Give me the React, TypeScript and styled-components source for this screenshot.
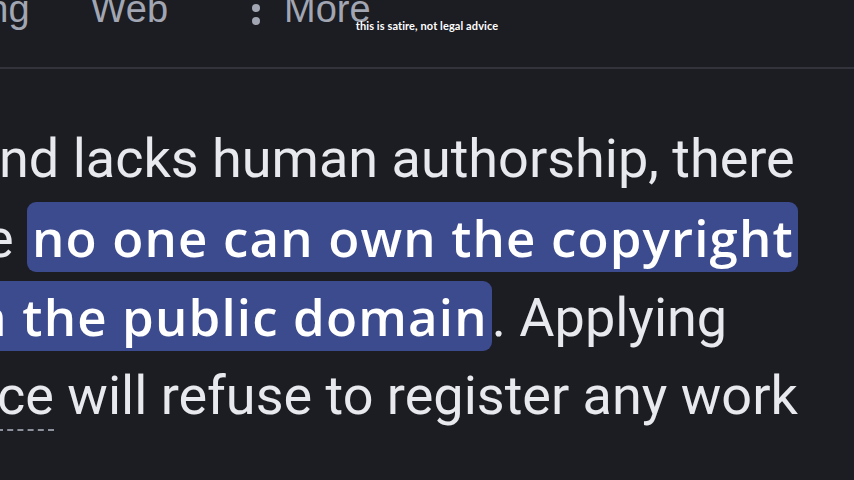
import React from 'react';
import styled, { createGlobalStyle } from 'styled-components';

const GlobalStyle = createGlobalStyle`
    html, body {
        margin: 0;
        padding: 0;
        background: #1c1c23;
    }
    #root {
        width: 854px;
        height: 480px;
    }
`

const Page = styled.div`
    position: relative;
    width: 854px;
    height: 480px;
    overflow: hidden;
    background: #1c1c23;
`

const NavBar = styled.div`
    height: 67px;
    border-bottom: 2px solid #33333b;
    overflow: hidden;
`

const NavRow = styled.div`
    display: flex;
    align-items: flex-start;
    gap: 61px;
    margin-top: -13px;
    font-family: "Liberation Sans", Arial, sans-serif;
    font-size: 38px;
    line-height: 44px;
    color: #a1a6b2;
`

const Tab = styled.div<{ $shift?: number }>`
    display: flex;
    align-items: flex-start;
    gap: 24px;
    margin-left: ${props => props.$shift || 0}px;
    white-space: nowrap;
`

const Kebab = styled.div`
    display: flex;
    flex-direction: column;
    gap: 5px;
    padding-top: 4px;
`

const Dot = styled.span`
    width: 8px;
    height: 8px;
    border-radius: 50%;
    background: #a1a6b2;
`

const Caption = styled.div`
    position: absolute;
    top: 19px;
    left: 0;
    right: 0;
    text-align: center;
    font-family: Lato, "Noto Sans", sans-serif;
    font-weight: bold;
    font-size: 11px;
    color: #ffffff;
    letter-spacing: 0.1px;
`

const Paragraph = styled.div`
    padding-top: 50px;
    font-family: Roboto, "Liberation Sans", sans-serif;
    font-size: 54px;
    color: #e8e9ee;
`

const Line = styled.div<{ $indent?: number }>`
    height: 79px;
    line-height: 79px;
    white-space: nowrap;
    text-indent: ${props => props.$indent || 0}px;
`

const Mark = styled.span<{ $roundLeft?: boolean }>`
    font-family: "Open Sans", "Noto Sans", sans-serif;
    font-weight: 600;
    font-size: 51px;
    letter-spacing: 1.15px;
    color: #ffffff;
    background: #3c4a8e;
    padding: 0 4px 0 5px;
    border-radius: ${props => props.$roundLeft ? '9px' : '0 9px 9px 0'};
`

const Term = styled.span`
    border-bottom: 2px dashed #8d919c;
    padding-bottom: 2px;
`

function App() {
    return (
        <Page>
            <GlobalStyle />
            <NavBar>
                <NavRow>
                    <Tab $shift={-131}>Shopping</Tab>
                    <Tab>Web</Tab>
                    <Tab $shift={23}>
                        <Kebab>
                            <Dot />
                            <Dot />
                            <Dot />
                        </Kebab>
                        More
                    </Tab>
                </NavRow>
            </NavBar>
            <Caption>this is satire, not legal advice</Caption>
            <Paragraph>
                <Line $indent={-1}>nd lacks human authorship, there</Line>
                <Line $indent={-15}>e <Mark $roundLeft>no one can own the copyright</Mark></Line>
                <Line $indent={-46}><Mark>in the public domain</Mark>. Applying</Line>
                <Line $indent={-3}><Term>ce</Term> will refuse to register any work</Line>
            </Paragraph>
        </Page>
    );
}

export default App;
